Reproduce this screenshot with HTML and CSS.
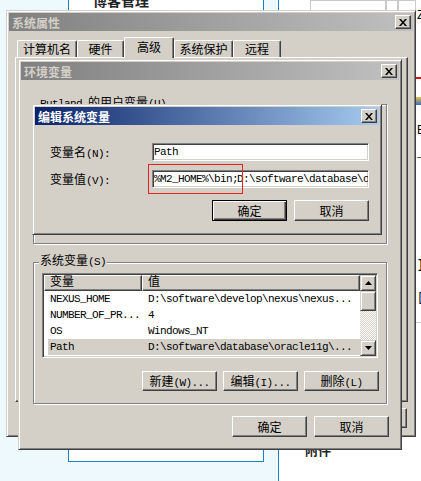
FILE: index.html
```html
<!DOCTYPE html>
<html>

<head>
    <meta charset="utf-8">
    <title>环境变量</title>
    <link rel="stylesheet" href="styles.css">
</head>

<body>
    <div class="desk">
        <div class="gutter"></div>
        <div class="blog">
            <div class="blogTitle">博客管理</div>
        </div>
        <div class="gap"></div>
        <div class="rightCol">
            <div class="rightMain">
                <div class="topCells">
                    <span class="cell cellA"></span>
                    <span class="cell cellB"></span>
                    <span class="cell cellC"></span>
                </div>
                <div class="attach">附件</div>
            </div>
            <div class="edge">
                <span class="edgeGlyph glyphTop">Z</span>
                <span class="edgeRed"></span>
                <span class="edgeIcon"></span>
                <span class="edgeGlyph glyphE">E</span>
                <span class="edgeGlyph glyphI">_I</span>
                <span class="edgeGlyph glyphClose">]</span>
                <span class="edgeGlyph glyphOpen">[</span>
                <span class="edgeLine"></span>
            </div>
        </div>
    </div>

    <!-- 系统属性 -->
    <div class="win sysProps">
        <div class="titleBar inactive">
            <span>系统属性</span>
            <span class="closeBtn"><svg width="8" height="7" viewBox="0 0 8 7"><path d="M0 0h2l2 2.5L6 0h2L5 3.5 8 7H6L4 4.5 2 7H0l3-3.5z"/></svg></span>
        </div>
        <div class="tabs">
            <div class="tab tabA">计算机名</div>
            <div class="tab tabB">硬件</div>
            <div class="tab tabC active">高级</div>
            <div class="tab tabD">系统保护</div>
            <div class="tab tabE">远程</div>
        </div>
        <div class="tabPanel"></div>
        <div class="dlgButtons sysButtons">
            <button type="button" class="btn">确定</button>
            <button type="button" class="btn">取消</button>
            <button type="button" class="btn">应用<span class="mono">(A)</span></button>
        </div>
    </div>

    <!-- 环境变量 -->
    <div class="win envVars">
        <div class="titleBar inactive">
            <span>环境变量</span>
            <span class="closeBtn"><svg width="8" height="7" viewBox="0 0 8 7"><path d="M0 0h2l2 2.5L6 0h2L5 3.5 8 7H6L4 4.5 2 7H0l3-3.5z"/></svg></span>
        </div>

        <fieldset class="group userGroup">
            <legend><span class="mono">Rutland </span>的用户变量<span class="mono">(U)</span></legend>
        </fieldset>

        <fieldset class="group sysGroup">
            <legend>系统变量<span class="mono">(S)</span></legend>
            <div class="listView">
                <div class="listRows">
                    <div class="listHeader">
                        <div class="hCell hCol1">变量</div>
                        <div class="hCell hCol2">值</div>
                    </div>
                    <div class="row">
                        <div class="col1 mono">NEXUS_HOME</div>
                        <div class="col2 mono">D:\software\develop\nexus\nexus...</div>
                    </div>
                    <div class="row">
                        <div class="col1 mono">NUMBER_OF_PR...</div>
                        <div class="col2 mono">4</div>
                    </div>
                    <div class="row">
                        <div class="col1 mono">OS</div>
                        <div class="col2 mono">Windows_NT</div>
                    </div>
                    <div class="row sel">
                        <div class="col1 mono">Path</div>
                        <div class="col2 mono">D:\software\database\oracle11g\...</div>
                    </div>
                </div>
                <div class="scrollBar">
                    <div class="sbBtn"><svg width="7" height="4" viewBox="0 0 7 4"><polygon points="0,4 3.5,0 7,4"/></svg></div>
                    <div class="sbThumb"></div>
                    <div class="sbTrack"></div>
                    <div class="sbBtn"><svg width="7" height="4" viewBox="0 0 7 4"><polygon points="0,0 7,0 3.5,4"/></svg></div>
                </div>
            </div>
            <div class="groupButtons">
                <button type="button" class="btn">新建<span class="mono">(W)...</span></button>
                <button type="button" class="btn">编辑<span class="mono">(I)...</span></button>
                <button type="button" class="btn">删除<span class="mono">(L)</span></button>
            </div>
        </fieldset>

        <div class="dlgButtons envButtons">
            <button type="button" class="btn">确定</button>
            <button type="button" class="btn">取消</button>
        </div>
    </div>

    <!-- 编辑系统变量 -->
    <div class="win editVar">
        <div class="titleBar">
            <span>编辑系统变量</span>
            <span class="closeBtn"><svg width="8" height="7" viewBox="0 0 8 7"><path d="M0 0h2l2 2.5L6 0h2L5 3.5 8 7H6L4 4.5 2 7H0l3-3.5z"/></svg></span>
        </div>
        <div class="editForm">
            <label>变量名<span class="mono">(N):</span></label>
            <div class="field mono">Path</div>
            <label>变量值<span class="mono">(V):</span></label>
            <div class="field mono">%M2_HOME%\bin;<span class="caret"></span>D:\software\database\oracle11g\product\11.2.0\dbhome_1\bin;</div>
        </div>
        <div class="dlgButtons editButtons">
            <button type="button" class="btn default">确定</button>
            <button type="button" class="btn">取消</button>
        </div>
    </div>

    <div class="redMark"></div>
</body>

</html>
```

FILE: styles.css
```css
html,
body {
    margin: 0;
    padding: 0;
}

body {
    width: 421px;
    height: 481px;
    overflow: hidden;
    background-color: #eef9fd;
    font-family: "Liberation Mono", "Noto Sans CJK SC", monospace;
    font-size: 12px;
    color: #000;
    position: relative;
}

/* page behind the dialogs */
.desk {
    display: flex;
    height: 481px;
}

.gutter {
    width: 68px;
}

.blog {
    box-sizing: border-box;
    width: 196px;
    height: 462px;
    background-color: #fff;
    border: 1px solid #1683c4;
    border-top: none;
    padding-left: 24px;
}

.blogTitle {
    margin-top: -8px;
    font-family: "Noto Sans CJK SC", sans-serif;
    font-size: 14px;
    font-weight: bold;
    line-height: 16px;
    color: #222;
}

.gap {
    width: 14px;
}

.rightCol {
    flex: 1;
    display: flex;
    border-left: 1px solid #1683c4;
    background-color: #fff;
}

.rightMain {
    flex: 1;
}

.topCells {
    display: flex;
    height: 10px;
    padding-left: 31px;
}

.cell {
    box-sizing: border-box;
    height: 10px;
    border: 1px solid #c9c9c9;
    border-bottom: none;
}

.cellA {
    width: 76px;
}

.cellB {
    width: 12px;
}

.cellC {
    flex: 1;
}

.attach {
    margin: 433px 0 0 26px;
    font-family: "Noto Sans CJK SC", sans-serif;
    font-size: 13px;
    font-weight: bold;
    line-height: 14px;
    color: #222;
}

.edge {
    width: 5px;
    display: flex;
    flex-direction: column;
    overflow: hidden;
}

.edgeGlyph {
    font-size: 12px;
    line-height: 12px;
    padding-left: 1px;
}

.glyphTop {
    margin-top: 10px;
}

.edgeRed {
    height: 2px;
    margin-top: 55px;
    margin-left: -2px;
    background-color: #e01010;
}

.edgeIcon {
    width: 5px;
    height: 8px;
    margin-top: 18px;
    background: linear-gradient(#e8c040, #3a6cc8);
}

.glyphE {
    margin-top: 20px;
}

.glyphI {
    margin-top: 10px;
}

.glyphClose {
    margin-top: 100px;
    font-weight: bold;
}

.glyphOpen {
    margin-top: 21px;
}

.edgeLine {
    height: 1px;
    margin-top: 18px;
    background-color: #cfcfcf;
}

/* classic dialogs */
.win {
    position: absolute;
    box-sizing: border-box;
    display: flex;
    flex-direction: column;
    padding: 2px;
    background-color: #d4d0c8;
    border: 1px solid;
    border-color: #d4d0c8 #404040 #404040 #d4d0c8;
    box-shadow: inset 1px 1px #fff, inset -1px -1px #808080;
}

.sysProps {
    left: 6px;
    top: 10px;
    width: 410px;
    height: 427px;
}

.envVars {
    left: 18px;
    top: 59px;
    width: 384px;
    height: 391px;
}

.editVar {
    left: 32px;
    top: 104px;
    width: 350px;
    height: 131px;
}

.titleBar {
    display: flex;
    justify-content: space-between;
    align-items: center;
    height: 18px;
    padding: 0 2px 0 3px;
    background: linear-gradient(to right, #0a246a, #a6caf0);
    color: #fff;
    font-family: "Noto Sans CJK SC", sans-serif;
    font-weight: bold;
    font-size: 12px;
    flex-shrink: 0;
}

.titleBar.inactive {
    background: linear-gradient(to right, #808080, #c0c0c0);
    color: #d4d0c8;
}

.closeBtn {
    box-sizing: border-box;
    width: 16px;
    height: 14px;
    display: flex;
    align-items: center;
    justify-content: center;
    background-color: #d4d0c8;
    border: 1px solid;
    border-color: #fff #404040 #404040 #fff;
    box-shadow: inset -1px -1px #808080;
}

.btn {
    box-sizing: border-box;
    width: 75px;
    height: 21px;
    padding: 0;
    background-color: #d4d0c8;
    border: 1px solid;
    border-color: #fff #404040 #404040 #fff;
    box-shadow: inset -1px -1px #808080;
    font: inherit;
    color: #000;
}

.btn.default {
    border-color: #000;
    box-shadow: inset 1px 1px #fff, inset -1px -1px #404040, inset -2px -2px #808080;
}

.dlgButtons {
    display: flex;
    justify-content: flex-end;
}

.mono {
    font-family: "Liberation Mono", monospace;
    font-size: 11px;
    letter-spacing: -0.6px;
}

/* 系统属性 tabs */
.tabs {
    display: flex;
    align-items: flex-end;
    height: 20px;
    margin: 6px 0 0 8px;
}

.tab {
    box-sizing: border-box;
    height: 17px;
    border: 1px solid;
    border-color: #fff #404040 transparent #fff;
    border-bottom: none;
    border-radius: 2px 2px 0 0;
    box-shadow: inset -1px 0 #808080;
    text-align: center;
    line-height: 16px;
    font-family: "Noto Sans CJK SC", sans-serif;
}

.tab.active {
    position: relative;
    z-index: 1;
    height: 21px;
    margin-bottom: -1px;
    background-color: #d4d0c8;
    line-height: 18px;
}

.tabA {
    width: 60px;
}

.tabB {
    width: 47px;
}

.tabC {
    width: 50px;
}

.tabD {
    width: 59px;
}

.tabE {
    width: 48px;
}

.tabPanel {
    box-sizing: border-box;
    height: 345px;
    margin: 0 5px 0 6px;
    border: 1px solid;
    border-color: #fff #404040 #404040 #fff;
    box-shadow: inset -1px -1px #808080;
}

.sysButtons {
    gap: 7px;
    margin-top: 6px;
    padding-right: 6px;
}

.sysButtons .btn {
    height: 20px;
}

/* 环境变量 groups */
.group {
    box-sizing: border-box;
    margin: 0 12px;
    padding: 4px 7px 0 8px;
    min-width: 0;
    border: 1px solid #808080;
    box-shadow: 1px 1px #fff, inset 1px 1px #fff;
}

.group legend {
    margin-left: -3px;
    padding: 0 1px;
    background-color: #d4d0c8;
    line-height: 14px;
}

.userGroup {
    margin-top: 17px;
    height: 147px;
}

.sysGroup {
    margin-top: 11px;
    height: 149px;
}

.listView {
    box-sizing: border-box;
    display: flex;
    width: 336px;
    height: 85px;
    padding: 1px;
    background-color: #fff;
    border: 1px solid;
    border-color: #808080 #fff #fff #808080;
    box-shadow: inset 1px 1px #404040, inset -1px -1px #d4d0c8;
}

.listRows {
    flex: 1;
}

.listHeader {
    display: flex;
    height: 16px;
}

.hCell {
    box-sizing: border-box;
    height: 16px;
    padding-left: 5px;
    line-height: 14px;
    background-color: #d4d0c8;
    border: 1px solid;
    border-color: #fff #404040 #404040 #fff;
    box-shadow: inset -1px -1px #808080;
}

.hCol1 {
    width: 98px;
}

.hCol2 {
    flex: 1;
}

.row {
    display: flex;
    align-items: center;
    height: 16px;
    white-space: nowrap;
}

.col1 {
    box-sizing: border-box;
    width: 98px;
    padding-left: 6px;
}

.col2 {
    padding-left: 6px;
}

.row.sel {
    margin-left: 4px;
    background-color: #d4d0c8;
}

.row.sel .col1 {
    width: 94px;
    padding-left: 2px;
}

.scrollBar {
    display: flex;
    flex-direction: column;
    width: 16px;
}

.sbBtn,
.sbThumb {
    box-sizing: border-box;
    display: flex;
    align-items: center;
    justify-content: center;
    height: 16px;
    background-color: #d4d0c8;
    border: 1px solid;
    border-color: #d4d0c8 #404040 #404040 #d4d0c8;
    box-shadow: inset 1px 1px #fff, inset -1px -1px #808080;
}

.sbThumb {
    height: 20px;
}

.sbTrack {
    flex: 1;
    background: repeating-conic-gradient(#fff 0 25%, #d4d0c8 0 50%) 0 0 / 2px 2px;
}

.groupButtons {
    display: flex;
    justify-content: flex-end;
    gap: 6px;
    margin-top: 13px;
}

.groupButtons .btn {
    height: 20px;
}

.envButtons {
    gap: 7px;
    margin-top: 12px;
    padding-right: 10px;
}

/* 编辑系统变量 */
.editForm {
    display: grid;
    grid-template-columns: 102px 217px;
    row-gap: 9px;
    align-items: center;
    padding: 18px 0 0 15px;
}

.field {
    box-sizing: border-box;
    display: flex;
    align-items: center;
    height: 18px;
    padding-left: 1px;
    overflow: hidden;
    white-space: nowrap;
    background-color: #fff;
    border: 1px solid;
    border-color: #808080 #fff #fff #808080;
    box-shadow: inset 1px 1px #404040, inset -1px -1px #d4d0c8;
}

.caret {
    display: inline-block;
    width: 1px;
    height: 13px;
    margin-right: -1px;
    background-color: #000;
}

.editButtons {
    gap: 7px;
    margin-top: 12px;
    padding-right: 10px;
}

.editButtons .btn {
    height: 21px;
}

.redMark {
    position: absolute;
    left: 148px;
    top: 164px;
    box-sizing: border-box;
    width: 95px;
    height: 30px;
    border: 1px solid #e3241f;
}
```
